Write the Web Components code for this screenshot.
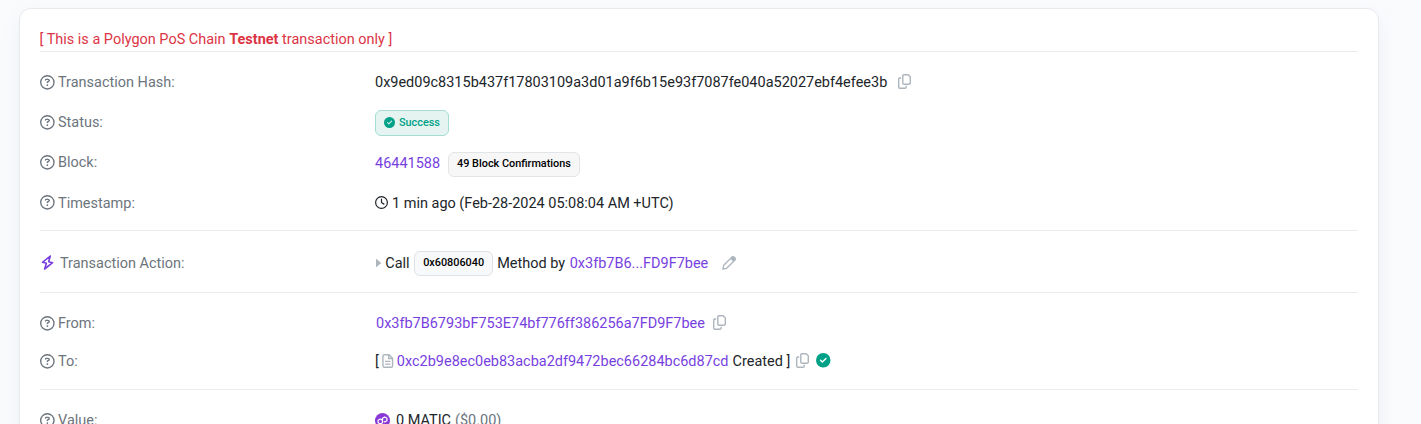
<!DOCTYPE html>
<html lang="en">
<head>
<meta charset="utf-8">
<title>Transaction Details</title>
<style>
html{height:100%;overflow:hidden}
body{margin:0;height:100%;overflow:hidden;background:#fafbfd;font:400 14.47px/22px Roboto,sans-serif;color:#212529}
</style>
</head>
<body>
<tx-page></tx-page>
<script>
const ICONS = {
  question: ['0 0 512 512', '<path fill="currentColor" d="M464 256A208 208 0 1 0 48 256a208 208 0 1 0 416 0zM0 256a256 256 0 1 1 512 0A256 256 0 1 1 0 256zm169.800-90.700c7.900-22.300 29.100-37.300 52.800-37.300h58.300c34.900 0 63.100 28.300 63.100 63.100c0 22.600-12.100 43.500-31.700 54.800L280 264.400c-.2 13-10.900 23.600-24 23.600c-13.300 0-24-10.700-24-24V250.500c0-8.600 4.600-16.500 12.100-20.800l44.300-25.400c4.700-2.700 7.600-7.700 7.600-13.100c0-8.400-6.800-15.100-15.100-15.100H222.600c-3.400 0-6.400 2.100-7.500 5.300l-.4 1.200c-4.400 12.500-18.200 19-30.600 14.600s-19-18.200-14.600-30.600l.4-1.200zM224 352a32 32 0 1 1 64 0 32 32 0 1 1 -64 0z"/>'],
  check: ['0 0 512 512', '<path fill="currentColor" d="M256 512A256 256 0 1 0 256 0a256 256 0 1 0 0 512zM369 209L241 337c-9.400 9.400-24.600 9.400-33.900 0l-64-64c-9.400-9.400-9.400-24.600 0-33.900s24.600-9.400 33.900 0l47 47L335 175c9.400-9.400 24.600-9.400 33.900 0s9.400 24.600 0 33.900z"/>'],
  clock: ['0 0 512 512', '<path fill="currentColor" d="M464 256A208 208 0 1 1 48 256a208 208 0 1 1 416 0zM0 256a256 256 0 1 0 512 0A256 256 0 1 0 0 256zM232 120V256c0 8 4 15.500 10.700 20l96 64c11 7.400 25.900 4.400 33.300-6.700s4.400-25.900-6.700-33.300L280 243.200V120c0-13.300-10.700-24-24-24s-24 10.700-24 24z"/>'],
  copy: ['0 0 13 15', '<g fill="none" stroke="currentColor" stroke-width="1.4"><path d="M6 .7h4.200L12.300 2.800V9A1.200 1.200 0 0 1 11.100 10.200H6A1.200 1.200 0 0 1 4.800 9V1.900A1.200 1.200 0 0 1 6 .7z"/><path d="M3.200 4H1.900A1.200 1.200 0 0 0 .7 5.200V13a1.200 1.200 0 0 0 1.200 1.200H7A1.200 1.200 0 0 0 8.200 13V11.800"/></g>'],
  file: ['0 0 11 14', '<g fill="none" stroke="currentColor" stroke-width="1.4"><path d="M2 .7h4.800l3.500 3.500V12A1.300 1.300 0 0 1 9 13.300H2A1.300 1.300 0 0 1 .7 12V2A1.300 1.300 0 0 1 2 .7z"/><path d="M6.500 1v3.500H10M2.800 7.400h5.400M2.800 10.100h5.400"/></g>'],
  pencil: ['0 0 14 14', '<path fill="none" stroke="currentColor" stroke-width="1.300" stroke-linejoin="round" d="M.8 13.200l.9-3.900L10 1a1.400 1.400 0 0 1 2 0l1 1a1.400 1.400 0 0 1 0 2l-8.300 8.300z"/><path fill="currentColor" d="M8.300 2.700L10 1a1.400 1.400 0 0 1 2 0l1 1a1.400 1.400 0 0 1 0 2l-1.700 1.700z"/>'],
  bolt: ['0 0 13 15', '<path fill="none" stroke="currentColor" stroke-width="1.600" stroke-linejoin="round" d="M9.300 1L1.500 7.300l3.900.9L3.600 14l8-6.300-3.900-.9z"/>'],
  caret: ['0 0 5 8', '<path fill="currentColor" d="M0 0v8q.3.200.8-.2l3.900-3.300q.500-.5 0-1L.8.2Q.3-.2 0 0z"/>'],
  matic: ['0 0 15 15', '<circle cx="7.500" cy="7.500" r="7.500" fill="#8a38d6"/><g fill="none" stroke="#fff" stroke-width="1.200" stroke-linejoin="round"><path d="M7.300 7.100L5.300 6 3.100 7.300v2.500l2.200 1.300 2.200-1.300V5.200l2.200-1.300 2.200 1.300v2.500L9.700 9l-.9-.5"/></g>']
};
class TxIcon extends HTMLElement {
  connectedCallback() {
    const [box, body] = ICONS[this.getAttribute('name')];
    const w = this.getAttribute('w') || 15, h = this.getAttribute('h') || w;
    this.attachShadow({mode: 'open'}).innerHTML =
      `<style>:host{display:block;flex:none;width:${w}px;height:${h}px}svg{display:block;overflow:visible}</style><svg width="${w}" height="${h}" viewBox="${box}" aria-hidden="true">${body}</svg>`;
  }
}
customElements.define('tx-icon', TxIcon);

function define(name, html) {
  const t = document.createElement('template');
  t.innerHTML = html;
  customElements.define(name, class extends HTMLElement {
    constructor() {
      super();
      this.attachShadow({mode: 'open'}).append(t.content.cloneNode(true));
    }
  });
}
define('tx-badge', `<style>
:host{display:flex;align-items:center;gap:4px;box-sizing:border-box;height:25px;padding:0 8px 1px;border:1px solid #e2e5e8;border-radius:6px;background:#f7f7f8;color:#000;font-size:10.875px;font-weight:500;line-height:14px;white-space:nowrap}
:host([kind=success]){height:26px;background:#e5f4f1;border-color:#a6ddd3;color:#00a186}
:host([kind=method]){background:#f8f9fa;border-color:#dee2e6}
</style><slot></slot>`);
define('tx-link', `<style>:host{display:block;color:#783fdf;white-space:nowrap}</style><slot></slot>`);
define('tx-rule', `<style>:host{display:block;height:1px;background:#ebecee}</style>`);
define('tx-row', `<style>
:host{display:grid;grid-template-columns:335px 1fr;align-items:center;height:40px}
div{display:flex;align-items:center;white-space:nowrap}
::slotted(span),::slotted(tx-link){padding-top:2px}
.label{color:#6c757d;gap:4px}
.label slot>tx-icon{margin:0 -.3px 0 -.4px}
</style><div class="label"><slot name="icon"><tx-icon name="question" w="14.7"></tx-icon></slot><slot name="label"></slot></div><div><slot></slot></div>`);
define('tx-card', `<style>
:host{display:block;box-sizing:border-box;width:1360px;height:480px;padding:20px 20px 0;background:#fff;border:1px solid #e7e9ed;border-radius:12px;box-shadow:0 8px 19px rgba(189,197,209,.2)}
</style><slot></slot>`);
define('tx-page', `<style>
:host{display:block;box-sizing:border-box;height:100vh;overflow:hidden;padding:8px 0 0 19px}
.notice{height:22px;margin-left:-.5px;color:#dc3545;white-space:nowrap}
.notice b{font-weight:700}
.mute{color:#adb5bd}.green{color:#00a186}.gray{color:#6c757d}
</style>
<tx-card>
<div class="notice">[ This is a Polygon PoS Chain <b>Testnet</b> transaction only ]</div>
<tx-rule></tx-rule>
<tx-row style="margin-top:10px"><span slot="label">Transaction Hash:</span><span>0x9ed09c8315b437f17803109a3d01a9f6b15e93f7087fe040a52027ebf4efee3b</span><tx-icon class="mute" name="copy" w="13" h="15" style="margin:-1px 0 0 10.500px"></tx-icon></tx-row>
<tx-row><span slot="label">Status:</span><tx-badge kind="success" style="margin-top:2px"><tx-icon name="check" w="11" style="margin-top:-1px"></tx-icon><span>Success</span></tx-badge></tx-row>
<tx-row><span slot="label">Block:</span><tx-link style="margin-top:2px">46441588</tx-link><tx-badge style="margin:5px 0 0 8px">49 Block Confirmations</tx-badge></tx-row>
<tx-row style="height:41px"><span slot="label">Timestamp:</span><tx-icon name="clock" w="13"></tx-icon><span style="margin-left:4px">1 min ago (Feb-28-2024 05:08:04 AM +UTC)</span></tx-row>
<tx-rule style="margin-top:7px"></tx-rule>
<tx-row style="margin-top:12px"><tx-icon slot="icon" name="bolt" w="13" h="15" style="color:#783fdf;margin:-1px 2px 0 1px"></tx-icon><span slot="label">Transaction Action:</span><tx-icon class="mute" name="caret" w="5" h="8" style="margin:0 4.300px 0 1px"></tx-icon><span>Call</span><tx-badge kind="method" style="margin:0 4px 0 4.500px">0x60806040</tx-badge><span>Method by</span><tx-link style="margin-left:4.700px">0x3fb7B6...FD9F7bee</tx-link><tx-icon class="mute" name="pencil" w="14" style="margin:-1px 0 0 13.500px"></tx-icon></tx-row>
<tx-rule style="margin-top:9px"></tx-rule>
<tx-row style="margin-top:10px"><span slot="label">From:</span><tx-link style="margin-left:1px">0x3fb7B6793bF753E74bf776ff386256a7FD9F7bee</tx-link><tx-icon class="mute" name="copy" w="13" h="15" style="margin:-1px 0 0 8px"></tx-icon></tx-row>
<tx-row style="height:36px"><span slot="label">To:</span><span>[</span><tx-icon class="mute" name="file" w="11.500" h="14" style="margin:0 3.500px 0 3px"></tx-icon><tx-link>0xc2b9e8ec0eb83acba2df9472bec66284bc6d87cd</tx-link><span style="margin-left:4px">Created ]</span><tx-icon class="mute" name="copy" w="13" h="15" style="margin:-1px 0 0 6px"></tx-icon><tx-icon class="green" name="check" w="14.500" style="margin:-1px 0 0 7px"></tx-icon></tx-row>
<tx-rule style="margin-top:10px"></tx-rule>
<tx-row style="margin-top:10px"><span slot="label">Value:</span><tx-icon name="matic"></tx-icon><span style="margin-left:6px">0 MATIC</span><span class="gray" style="margin-left:4px">($0.00)</span></tx-row>
</tx-card>`);
</script>
</body>
</html>
